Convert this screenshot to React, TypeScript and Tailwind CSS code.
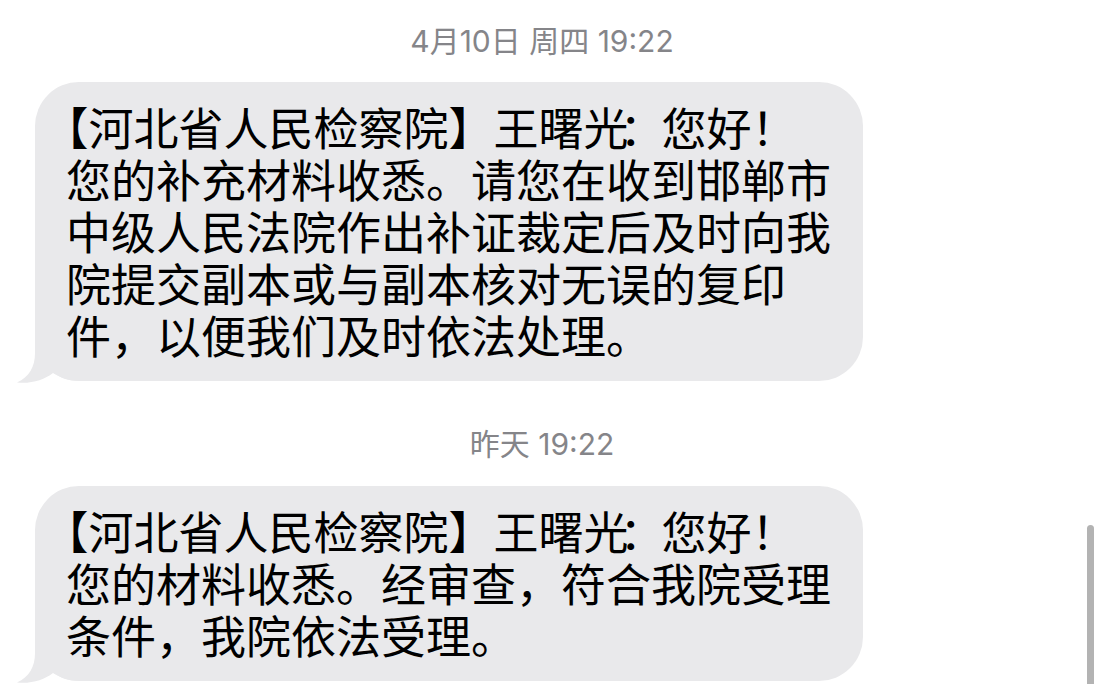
import React from 'react';

const halt = "[font-feature-settings:'halt']";

function Tail() {
  return (
    <svg
      className="absolute left-[-20px] bottom-[-3px]"
      width="64"
      height="48"
      viewBox="0 0 64 48"
    >
      <path
        d="M20 1 L20 17 C20 31 14 41 2 46.5 C16 48 29 44 38 37 C46 42 54 45 64 45 L64 1 Z"
        fill="#e9e9eb"
      />
    </svg>
  );
}

function Bubble({ lines }: { lines: React.ReactNode[] }) {
  return (
    <div className="relative ml-[35px] w-[828px] rounded-[44px] bg-[#e9e9eb] pl-[31px] pr-[32px] pt-[19px] pb-[20px]">
      <Tail />
      <p className="relative text-[45px] leading-[52px] text-black font-['Noto_Sans_CJK_SC',sans-serif]">
        {lines.map((l, i) => (
          <React.Fragment key={i}>
            {l}
            {i < lines.length - 1 && <br />}
          </React.Fragment>
        ))}
      </p>
    </div>
  );
}

function Stamp({ children }: { children: React.ReactNode }) {
  return (
    <div className="pr-[10px] text-center text-[30px] leading-[34px] text-[#858589] font-['Inter','Noto_Sans_CJK_SC',sans-serif]">
      {children}
    </div>
  );
}

const header = (
  <>
    <span className={halt}>【</span>河北省人民检察院】王曙光<span className="ml-[-9px] mr-[-3px]">：</span>您好！
  </>
);

export default function App() {
  return (
    <div className="relative w-[1094px] h-[684px] overflow-hidden bg-white">
      <div className="pt-[24px]">
        <Stamp>4月10日 周四 19:22</Stamp>
        <div className="mt-[24px]">
          <Bubble
            lines={[
              header,
              '您的补充材料收悉。请您在收到邯郸市',
              '中级人民法院作出补证裁定后及时向我',
              '院提交副本或与副本核对无误的复印',
              '件，以便我们及时依法处理。',
            ]}
          />
        </div>
        <div className="mt-[46px]">
          <Stamp>昨天 19:22</Stamp>
        </div>
        <div className="mt-[25px]">
          <Bubble
            lines={[
              header,
              '您的材料收悉。经审查，符合我院受理',
              '条件，我院依法受理。',
            ]}
          />
        </div>
      </div>

      {/* scroll indicator */}
      <div className="absolute right-0 top-[525px] h-[170px] w-[7px] rounded-tl-full rounded-tr-full bg-[#b3b3b3]" />
    </div>
  );
}
